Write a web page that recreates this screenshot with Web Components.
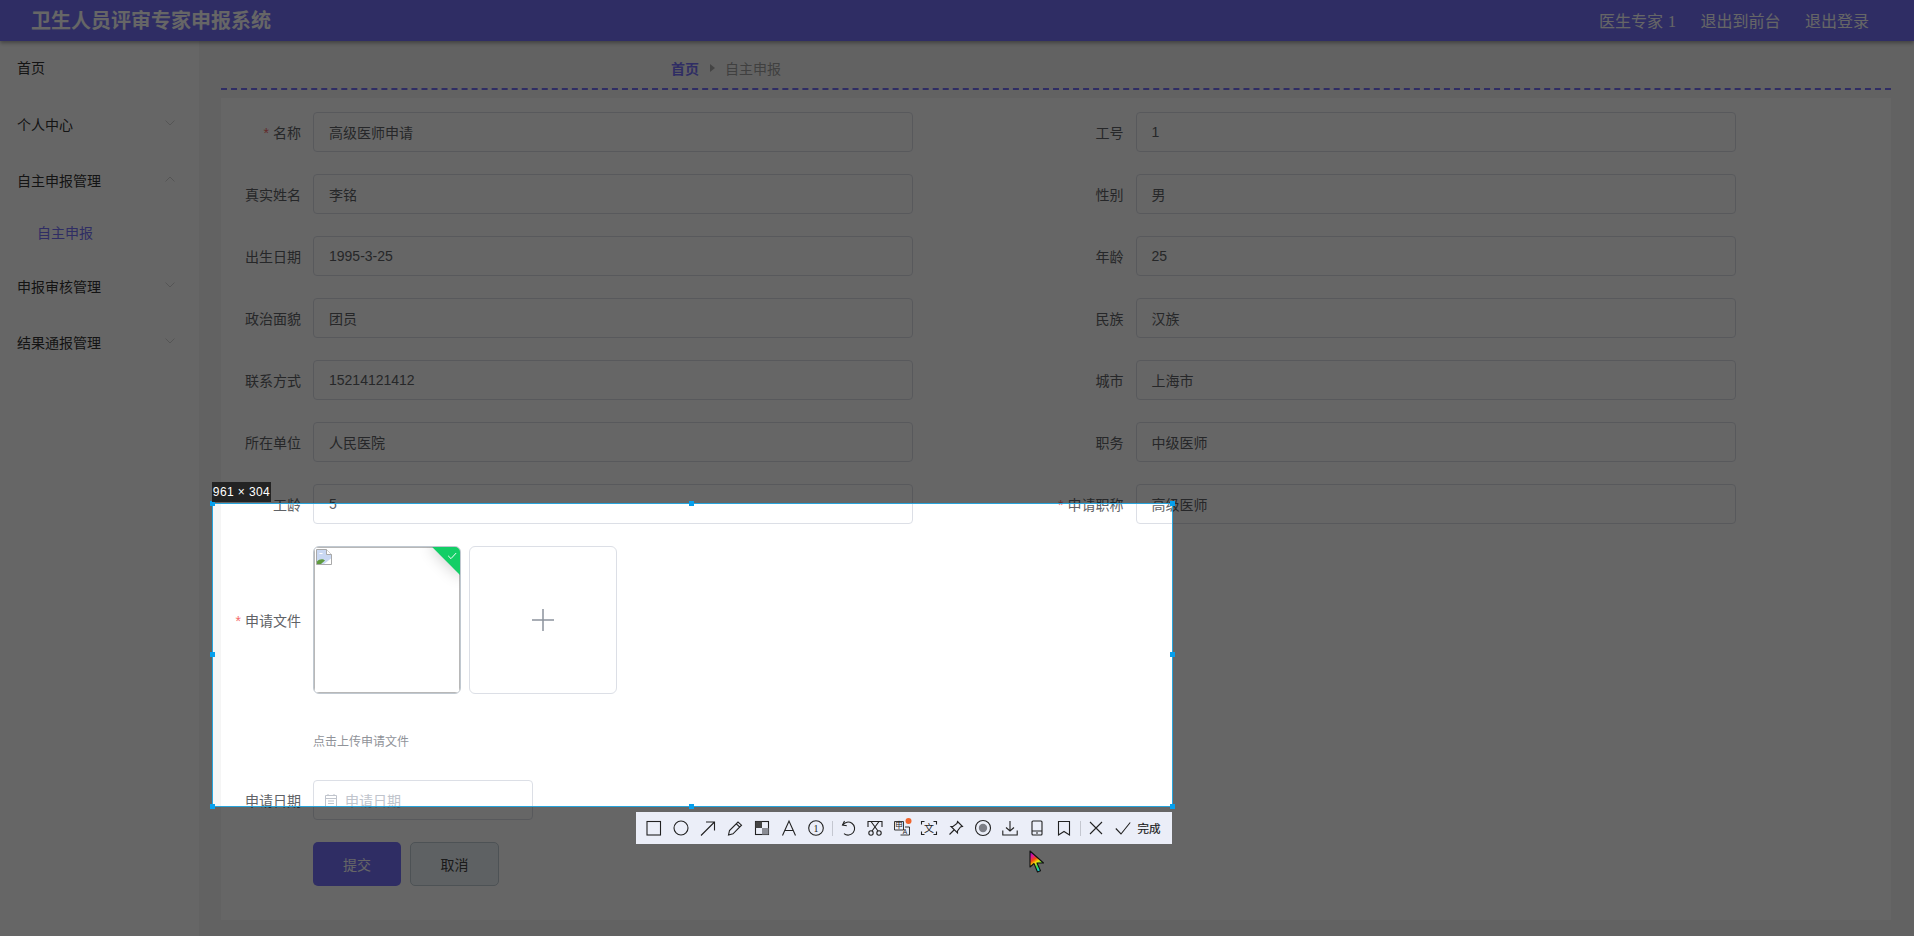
<!DOCTYPE html>
<html lang="zh"><head><meta charset="utf-8"><title>卫生人员评审专家申报系统</title>
<style>
html,body{margin:0;padding:0;background:#fff;overflow:hidden}
body{font:14px "Liberation Sans","Noto Sans CJK SC",sans-serif}
</style></head><body>
<app-root></app-root>
<script>
const FONT='"Liberation Sans","Noto Sans CJK SC",sans-serif';
function def(name,html){
  customElements.define(name,class extends HTMLElement{
    connectedCallback(){
      if(this.shadowRoot)return;
      const s=this.attachShadow({mode:'open'});
      s.innerHTML=typeof html==='function'?html(this):html;
    }
  });
}
def('app-header',`<style>
:host{display:flex;align-items:center;justify-content:space-between;height:41px;background:#7571f9;box-shadow:0 2px 4px rgba(0,0,0,.35);padding:0 45px 0 31px;box-sizing:border-box;position:relative}
.t{font-size:20px;font-weight:700;color:#fff;line-height:41px;padding-top:1px}
nav{display:flex;gap:24.5px;font-family:"Liberation Serif","Noto Sans CJK SC",serif;font-size:16px;color:#fff;padding-bottom:1px}
.u{word-spacing:1px}
</style><div class="t">卫生人员评审专家申报系统</div><nav><span class="u">医生专家 1</span><span>退出到前台</span><span>退出登录</span></nav>`);

const chev=(up)=>`<svg width="10" height="6" viewBox="0 0 10 6" fill="none" stroke="#d4d4d4" stroke-width="1"><path d="${up?'M.5 5.500 5 1l4.500 4.500':'M.5.5 5 5 9.500.5'}"/></svg>`;
def('menu-item',h=>`<style>
:host{display:flex;align-items:center;justify-content:space-between;height:56px;padding:0 24px 0 17px;color:#333;font-size:14px;box-sizing:border-box}
:host([first]){height:51px;margin-bottom:4px}
:host([sub]){height:48px;margin-bottom:2px;padding-left:37px;color:#7571f9}
svg{position:relative;top:-1px}
</style><slot></slot>${h.hasAttribute('down')?chev(false):h.hasAttribute('up')?chev(true):''}`);

def('side-menu',`<style>:host{display:block;width:199px;flex:none;background:#fff;height:895px}</style><slot></slot>`);

def('bread-crumb',`<style>
:host{display:flex;align-items:center;gap:10px;padding:6px 0 0 450px;box-sizing:border-box;font-size:14px;border-bottom:2px dashed #7571f9;height:49px}
b{color:#7571f9}
i{width:0;height:0;border-left:5px solid #aaa;border-top:4px solid transparent;border-bottom:4px solid transparent;margin-left:1px}
span{color:#a0a0a0}
</style><b>首页</b><i></i><span>自主申报</span>`);

def('form-field',h=>{
  const req=h.hasAttribute('required');
  return `<style>
  :host{display:flex;align-items:center;min-height:40px}
  label{width:80px;padding-right:12px;text-align:right;color:#606266;font-size:14px;flex:none}
  em{font-style:normal;color:#f56c6c;margin-right:4px}
  .box{display:flex;align-items:center;width:600px;height:40px;box-sizing:border-box;border:1px solid #dcdfe6;border-radius:4px;background:#fff;padding:0 15px;color:#606266;font-size:14px}
  :host([short]) .box{width:220px;padding:0 10px;color:#c0c4cc;gap:7px}
  :host([bare]) .box{display:none}
  </style><label>${req?'<em>*</em>':''}${h.getAttribute('label')}</label><div class="box"><slot name="icon"></slot>${h.getAttribute('value')||''}</div><slot></slot>`;
});

def('upload-list',`<style>
:host{display:flex;gap:8px}
.item{position:relative;width:148px;height:148px;box-sizing:border-box;border:1px solid #c0c8d0;border-radius:6px;overflow:hidden;background:#fff}
.frame{position:absolute;inset:0;border:1px solid #b8b8b8;box-sizing:border-box}
.frame svg{position:absolute;left:1px;top:1px}
.tag{position:absolute;right:-15px;top:-6px;width:40px;height:24px;background:#13ce66;transform:rotate(45deg);box-shadow:0 0 16px 1px rgba(0,0,0,.2)}
.tag svg{position:absolute;left:15px;top:12px;transform:rotate(-45deg)}
.add{width:148px;height:148px;box-sizing:border-box;border:1px solid #dcdfe6;border-radius:6px;display:flex;align-items:center;justify-content:center;background:#fff}
</style>
<div class="item"><div class="frame"><svg width="16" height="16" viewBox="0 0 16 16"><path d="M.5.5h10l5 5v10H.5z" fill="#c9d8f2" stroke="#a9a9a9"/><path d="M10.500.5v5h5" fill="#fff" stroke="#a9a9a9"/><path d="M1 15v-2.500c2-2.500 6-3 8-1l-4 3.500z" fill="#5f9b3e"/><path d="M8 15l7-5.500V15z" fill="#fff"/><path d="M3 5c0-1.500 4-1.500 4 0z" fill="#fff"/></svg></div><div class="tag"><svg width="10" height="8" viewBox="0 0 12 10" fill="none" stroke="#fff" stroke-width="1.200"><path d="M1 5l3.500 3.500L11 1.500"/></svg></div></div>
<div class="add"><svg width="24" height="24" viewBox="0 0 24 24" stroke="#8c939d" stroke-width="1.500"><path d="M12 1v22M1 12h22"/></svg></div>`);

def('app-button',`<style>
:host{display:flex;align-items:center;justify-content:center;width:88px;height:44px;box-sizing:border-box;border-radius:5px;font-size:14px;background:#7571f9;color:#fff}
:host([plain]){width:89px;background:#ebf3f8;border:1px solid #c0ccd4;color:#444}
</style><slot></slot>`);

def('apply-form',`<style>
:host{display:block;background:#fff;margin-top:8px;height:822px;box-sizing:border-box;padding-top:14px}
.grid{display:grid;grid-template-columns:822.5px 692px;row-gap:22px}
.up{margin-top:22px}
.hint{margin:38px 0 0 92px;font-size:12px;line-height:20px;color:#909399}
.date{margin-top:28px}
.btns{display:flex;gap:9px;margin:22px 0 0 92px}
</style>
<div class="grid">
<form-field label="名称" required value="高级医师申请"></form-field><form-field label="工号" value="1"></form-field>
<form-field label="真实姓名" value="李铭"></form-field><form-field label="性别" value="男"></form-field>
<form-field label="出生日期" value="1995-3-25"></form-field><form-field label="年龄" value="25"></form-field>
<form-field label="政治面貌" value="团员"></form-field><form-field label="民族" value="汉族"></form-field>
<form-field label="联系方式" value="15214121412"></form-field><form-field label="城市" value="上海市"></form-field>
<form-field label="所在单位" value="人民医院"></form-field><form-field label="职务" value="中级医师"></form-field>
<form-field label="工龄" value="5"></form-field><form-field label="申请职称" required value="高级医师"></form-field>
</div>
<form-field class="up" label="申请文件" required bare><upload-list></upload-list></form-field>
<div class="hint">点击上传申请文件</div>
<form-field class="date" label="申请日期" short value="申请日期"><svg slot="icon" width="14" height="14" viewBox="0 0 14 14" fill="none" stroke="#c0c4cc"><path d="M1.500 2.500h11v11h-11zM1.500 5.500h11M4 1v2M10 1v2M4 8h6M4 10.500h6"/></svg></form-field>
<div class="btns"><app-button>提交</app-button><app-button plain>取消</app-button></div>`);

def('main-pane',`<style>:host{display:block;flex:1;background:#f5f5f5;padding:0 23px 0 22px;height:895px;box-sizing:border-box}</style><bread-crumb></bread-crumb><apply-form></apply-form>`);

const S=c=>`<svg width="16" height="16" viewBox="0 0 16 16" fill="none" stroke="#222" stroke-width="1.100">${c}</svg>`;
const tbIcons=[
 '<rect x="1" y="1.500" width="13.500" height="13.500"/>',
 '<circle cx="8" cy="8" r="7"/>',
 '<path d="M1 15.500 14.500 2M6 2h8.500v8.500"/>',
 '<path d="M1.500 15l1-4.500L11 2l3.500 3.200L6 13.800zM9.300 3.800l3.400 3.200"/>',
 '<rect x="1.500" y="1.500" width="13" height="13"/><rect x="1.500" y="1.500" width="6.500" height="6.500" fill="#444" stroke="none"/><rect x="8" y="8" width="6.500" height="6.500" fill="#8a8c94" stroke="none"/>',
 '<path d="M1.500 15.500 8 1l6.500 14.500M4 10.500h8"/>',
 '<circle cx="8" cy="8" r="7.300"/><text x="8" y="11.500" text-anchor="middle" font-size="10" font-family="Liberation Serif,serif" fill="#222" stroke="none">1</text>',
 null,
 '<path d="M4.500 1 2.500 5l4.300.8"/><path d="M2.700 5A6.500 6.500 0 1 1 4 13.600"/>',
 '<path d="M1 7V1.500h14V7M4 1.500l7 9.500M12 1.500 5 11"/><circle cx="4" cy="13" r="2.200"/><circle cx="12" cy="13" r="2.200"/>',
 '<path d="M.5 1.500h9v8.500h-9zM6.500 15h9V7H11" stroke-width=".9"/><text x="5" y="8.300" text-anchor="middle" font-size="7.500" font-family="Noto Sans CJK SC,sans-serif" fill="#222" stroke="none">申</text><text x="11" y="13.800" text-anchor="middle" font-size="6.500" font-family="Liberation Sans,sans-serif" fill="#222" stroke="none">A</text><circle cx="14.500" cy="1" r="3" fill="#f0642d" stroke="none"/>',
 '<path d="M.5 4.500v-3h3M12.500 1.500h3v3M.5 11.500v3h3M12.500 14.500h3v-3"/><text x="8" y="11.500" text-anchor="middle" font-size="10" font-family="Noto Sans CJK SC,sans-serif" fill="#222" stroke="none">文</text>',
 '<path d="M9.500 1.500 14.500 6.500 12.500 7 9.500 11 9.500 13 3 6.500 5 6.500 9 3.500zM6 10 1.500 14.500"/>',
 '<circle cx="8" cy="8" r="7.500"/><circle cx="8" cy="8" r="4.200" fill="#7d7f87" stroke="none"/>',
 '<path d="M8 1v10M4 7.500 8 11l4-3.500M.8 10.500v4.500h14.400v-4.500"/>',
 '<rect x="3" y="1" width="10" height="14" rx="1"/><path d="M3 11h10M7 13h2"/>',
 '<path d="M2.500 1.500h11V15L8 11.500 2.500 15z"/>',
 null,
 '<path d="M2 2l12 12M14 2 2 14"/>',
 '<path d="M.8 8.500 6 14 15.200 2.500"/>'
];
def('capture-toolbar',`<style>
:host{position:absolute;left:636px;top:812px;width:536px;height:32px;background:#ebeef8;display:flex;align-items:center;padding-left:4.500px;box-sizing:border-box}
.i{width:27px;height:16px;display:flex;justify-content:center;flex:none}
.i svg{overflow:visible}
.s{width:1px;height:15px;background:#c4c7d0;margin:0 2px 0 2px;flex:none}
b{font-size:11.500px;font-weight:400;color:#222;margin-left:1px;-webkit-text-stroke:.2px #222}
</style>`+tbIcons.map(c=>c===null?'<span class="s"></span>':`<span class="i">${S(c)}</span>`).join('')+`<b>完成</b>`);

def('capture-overlay',`<style>
:host{position:absolute;inset:0;overflow:hidden;z-index:5}
.sel{position:absolute;left:212px;top:503px;width:961px;height:304px;box-sizing:border-box;border:1px solid #27a4dc;box-shadow:0 0 0 3000px rgba(0,0,0,.6)}
.h{position:absolute;width:5px;height:5px;background:#06a0ee}
.size{position:absolute;left:212px;top:482px;width:59px;height:20px;background:#232323;color:#fff;font-size:12px;line-height:20px;text-align:center;white-space:nowrap;letter-spacing:.4px}
.cur{position:absolute;left:1029px;top:850px}
</style>
<div class="sel">
<i class="h" style="left:-3px;top:-3px"></i><i class="h" style="left:476px;top:-3px"></i><i class="h" style="right:-3px;top:-3px"></i>
<i class="h" style="left:-3px;top:148px"></i><i class="h" style="right:-3px;top:148px"></i>
<i class="h" style="left:-3px;bottom:-3px"></i><i class="h" style="left:476px;bottom:-3px"></i><i class="h" style="right:-3px;bottom:-3px"></i>
</div>
<div class="size">961 × 304</div>
<capture-toolbar></capture-toolbar>
<svg class="cur" width="16" height="24" viewBox="0 0 16 24"><defs><linearGradient id="r" x1="0" y1="0" x2=".45" y2="1"><stop offset="0" stop-color="#4b12c8"/><stop offset=".25" stop-color="#e0129a"/><stop offset=".45" stop-color="#f24a10"/><stop offset=".62" stop-color="#f5e50a"/><stop offset=".8" stop-color="#3fdc4a"/><stop offset="1" stop-color="#12c8c8"/></linearGradient></defs><path d="M1 1v16l4-3.500L8.500 22l3-1.200L8 13h6.500z" fill="url(#r)" stroke="#111" stroke-width="1.100" stroke-linejoin="round"/></svg>`);

def('app-root',`<style>
:host{display:block;position:relative;width:1914px;height:936px;overflow:hidden;font-family:${FONT}}
.body{display:flex}
</style>
<app-header></app-header>
<div class="body">
<side-menu>
<menu-item first>首页</menu-item>
<menu-item down>个人中心</menu-item>
<menu-item up>自主申报管理</menu-item>
<menu-item sub>自主申报</menu-item>
<menu-item down>申报审核管理</menu-item>
<menu-item down>结果通报管理</menu-item>
</side-menu>
<main-pane></main-pane>
</div>
<capture-overlay></capture-overlay>`);
</script>
</body></html>
